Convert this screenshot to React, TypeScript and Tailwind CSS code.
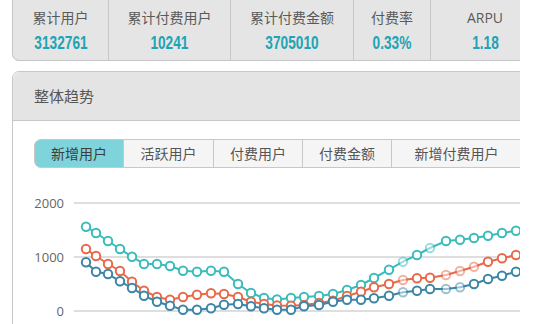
import React from "react"

const stats = [
  { label: "累计用户", value: "3132761", w: "w-[96px]" },
  { label: "累计付费用户", value: "10241", w: "w-[122px]" },
  { label: "累计付费金额", value: "3705010", w: "w-[123px]" },
  { label: "付费率", value: "0.33%", w: "w-[77px]" },
  { label: "ARPU", value: "1.18", w: "w-[108px]" },
]

const tabs = [
  { label: "新增用户", w: "w-[90px]" },
  { label: "活跃用户", w: "w-[90px]" },
  { label: "付费用户", w: "w-[89px]" },
  { label: "付费金额", w: "w-[89px]" },
  { label: "新增付费用户", w: "w-[130px]" },
]

const xs = [86, 96, 108, 120, 132, 144, 157, 170, 183, 197, 211, 224, 238, 251, 264, 277, 291, 304, 319, 333, 347, 361, 374, 389, 403, 417, 430, 446, 460, 474, 488, 502, 516]

// y positions in page pixels (0 => 312, 2000 => 204)
const series = [
  {
    color: "#3bbcbc",
    faded: [24, 26],
    ys: [227.7, 234, 242, 250, 257.7, 265, 265, 267, 271.7, 272.7, 271.7, 272.7, 285, 294, 299, 300.5, 299, 298, 297, 295, 291, 286, 279, 270.7, 262.7, 256, 249, 242, 240.7, 239, 236.7, 234, 231.7],
  },
  {
    color: "#e8694a",
    faded: [24, 27, 28, 29],
    ys: [250, 257, 265, 272, 282.7, 291.7, 298, 300.7, 298, 295.7, 294.3, 295, 298, 302.7, 305, 306.5, 306.7, 306, 304, 301.7, 297, 292.7, 288.3, 285, 281, 279.3, 278.7, 276, 272, 267.7, 262.7, 259.3, 256],
  },
  {
    color: "#3b86a6",
    faded: [24, 27, 28],
    ys: [263.3, 272.7, 275, 282.3, 289, 296.7, 302.7, 306.7, 310.7, 310.7, 309.3, 305.7, 305, 307.3, 309.3, 310.7, 310.7, 307.3, 306, 302.7, 300.7, 300.7, 299.3, 296.7, 293.3, 291.7, 290, 290, 288.3, 285, 280, 276.7, 272.7],
  },
]

function TrendChart() {
  return (
    <svg width="560" height="160" className="mt-[11px] block">
      <g transform="translate(-13,-180)">
        {[
          { y: 204, t: "2000" },
          { y: 258, t: "1000" },
          { y: 312, t: "0" },
        ].map((g) => (
          <g key={g.t}>
            <line x1={74} x2={580} y1={g.y} y2={g.y} stroke="#bdbdbd" strokeWidth={1} />
            <text x={64} y={g.y + 4.5} textAnchor="end" fontSize={13} fill="#666" fontFamily="'Open Sans', 'Liberation Sans', sans-serif">
              {g.t}
            </text>
          </g>
        ))}
        {series.map((s) => (
          <g key={s.color}>
            <polyline
              points={s.ys.map((y, i) => `${xs[i]},${y}`).join(" ")}
              fill="none"
              stroke={s.color}
              strokeWidth={2}
            />
            {s.ys.map((y, i) => (
              <circle
                key={i}
                cx={xs[i]}
                cy={y}
                r={4.2}
                fill="#fff"
                stroke={s.color}
                strokeWidth={2}
                opacity={s.faded.includes(i) ? 0.5 : 1}
              />
            ))}
          </g>
        ))}
      </g>
    </svg>
  )
}

export default function App() {
  return (
    <div
      className="h-[324px] w-[546px] overflow-hidden bg-white"
      style={{ fontFamily: "'Open Sans', 'Noto Sans CJK SC', sans-serif" }}
    >
      <div className="ml-3 w-[508px] overflow-hidden">
        <div className="flex h-[61px] w-[560px] rounded-bl-[7px] border-x border-b border-[#c4c4c4] bg-[#e5e5e5]">
          {stats.map((s, i) => (
            <div
              key={s.label}
              className={`${s.w} shrink-0 pt-[7px] text-center ${i < stats.length - 1 ? "border-r border-[#c8c8c8]" : ""}`}
            >
              <div className="text-[14px] leading-[22px] text-[#5a5a5a]">{s.label}</div>
              <div className="mt-[2px] leading-[24px]">
                <span
                  className="inline-block scale-x-[0.72] text-[19px] font-bold text-[#20a3b5]"
                  style={{ fontFamily: "'Liberation Sans', sans-serif" }}
                >
                  {s.value}
                </span>
              </div>
            </div>
          ))}
        </div>

        <div className="mt-[10px] w-[560px] rounded-t-[7px] border border-[#c8c8c8]">
          <div className="flex h-[49px] items-center rounded-t-[7px] border-b border-[#c8c8c8] bg-[#e4e4e4] pl-[21px] text-[15px] text-[#555]">
            整体趋势
          </div>
          <div className="pt-[18px]">
            <div className="flex pl-[21px]">
              {tabs.map((t, i) => (
                <div
                  key={t.label}
                  className={`${t.w} flex h-[29px] shrink-0 items-center justify-center border-y border-r border-[#c8c8c8] text-[14px] ${
                    i === 0 ? "rounded-l-[7px] border-l bg-[#7fd3da] text-[#3d3d3d]" : "bg-[#f5f5f5] text-[#555]"
                  }`}
                >
                  {t.label}
                </div>
              ))}
            </div>
            <TrendChart />
          </div>
        </div>
      </div>
    </div>
  )
}
